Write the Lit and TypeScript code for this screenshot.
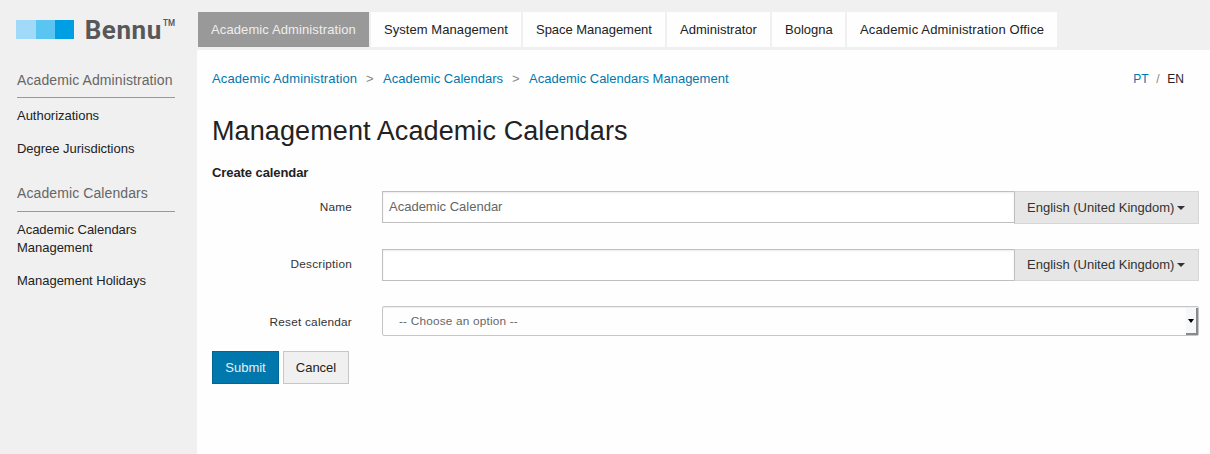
import { LitElement, html, css } from "lit";
import { customElement } from "lit/decorators.js";
import { classMap } from "lit/directives/class-map.js";
import { styleMap } from "lit/directives/style-map.js";

const base = css`
  *, *::before, *::after { box-sizing: border-box; }
  a { text-decoration: none; color: inherit; }
`;

@customElement("bennu-logo")
class BennuLogo extends LitElement {
  static styles = css`
    :host { display: block; height: 30px; }
    svg { display: block; }
    .word { font: 700 26px "Roboto", sans-serif; fill: #58585a; }
    .tm { font: 600 8.5px "Roboto", sans-serif; fill: #58585a; }
  `;
  render() {
    return html`<svg width="162" height="30" viewBox="0 0 162 30">
      <rect x="0" y="4" width="20" height="19" fill="#a1daf8" />
      <rect x="20" y="4" width="19" height="19" fill="#5bc5f2" />
      <rect x="39" y="4" width="19" height="19" fill="#009fe3" />
      <text class="word" x="68.7" y="23" textLength="76.5" lengthAdjust="spacing">Bennu</text>
      <text class="tm" x="147" y="10" textLength="12" lengthAdjust="spacingAndGlyphs">TM</text>
    </svg>`;
  }
}

@customElement("side-menu")
class SideMenu extends LitElement {
  static styles = [base, css`
    :host { display: block; width: 197px; padding: 16px 22px 0 16px; background: #f0f0f0; color: #222; }
    .group { margin: 0 0 18px 1px; width: 158px; }
    .heading { height: 36px; padding-top: 8px; border-bottom: 1px solid #999; font-size: 14px; line-height: 18px; letter-spacing: .1px; color: #666; white-space: nowrap; }
    .first { margin-top: 17px; height: 35px; }
    .item { display: block; margin-top: 15px; line-height: 18px; letter-spacing: -.02px; }
    .heading + .item { margin-top: 9px; }
  `];
  render() {
    return html`<bennu-logo></bennu-logo>
      <div class="group">
        <div class="heading first">Academic Administration</div>
        <a class="item">Authorizations</a>
        <a class="item">Degree Jurisdictions</a>
      </div>
      <div class="group">
        <div class="heading">Academic Calendars</div>
        <a class="item">Academic Calendars Management</a>
        <a class="item">Management Holidays</a>
      </div>`;
  }
}

const tabs = [
  { title: "Academic Administration", width: 171, tracking: 0.11 },
  { title: "System Management", width: 150, tracking: 0.06 },
  { title: "Space Management", width: 142, tracking: -0.03 },
  { title: "Administrator", width: 103, tracking: 0.03 },
  { title: "Bologna", width: 73, tracking: 0 },
  { title: "Academic Administration Office", width: 210, tracking: 0.15 },
];

@customElement("top-tabs")
class TopTabs extends LitElement {
  static styles = [base, css`
    :host { display: flex; gap: 2px; height: 50px; padding: 12px 0 3px 1px; background: #f0f0f0; }
    .tab { flex: none; padding-left: 13px; line-height: 35px; background: #fefefe; color: #222; white-space: nowrap; }
    .on { background: #999; color: #eee; }
  `];
  render() {
    return tabs.map((t, i) => html`<a class=${classMap({ tab: true, on: i === 0 })}
      style=${styleMap({ width: `${t.width}px`, letterSpacing: `${t.tracking}px` })}>${t.title}</a>`);
  }
}

@customElement("calendar-form")
class CalendarForm extends LitElement {
  static styles = [base, css`
    :host { display: block; }
    .row { display: grid; grid-template-columns: 140px 817px; column-gap: 30px; }
    .name { height: 58px; }
    .description { height: 57px; }
    .reset { height: 45px; }
    .label { font-size: 11.8px; line-height: 32px; letter-spacing: .22px; text-align: right; color: #333; }
    .description .label { line-height: 31px; }
    .group { display: flex; align-items: flex-start; }
    .input { width: 632px; height: 32px; padding: 0 6px; border: 1px solid #bfbfbf; border-right: 0; box-shadow: inset 0 1px 2px rgba(0,0,0,.08); background: #fff; color: #666; line-height: 30px; }
    .lang { display: flex; align-items: center; gap: 3px; width: 185px; height: 33px; padding-left: 12px; border: 1px solid #d6d6d6; border-left-color: #bfbfbf; background: #e6e6e6; color: #333; white-space: nowrap; }
    .description .lang { height: 32px; }
    .description .lang span { margin-top: -1px; }
    .caret { border: 4px solid transparent; border-top-color: #333; border-bottom: 0; }
    .select { display: flex; justify-content: space-between; height: 30px; padding: 1px 0 0 16px; border: 1px solid #c6c6c6; border-radius: 2px; box-shadow: inset 0 1px 1px rgba(0,0,0,.07); background: #fefefe; font-size: 11.8px; line-height: 27px; letter-spacing: .19px; color: #666; }
    .arrow { display: flex; align-items: center; justify-content: center; width: 12px; background: #f5f7f8; border-right: 2px solid #8a8a8a; border-bottom: 2px solid #8a8a8a; }
    .arrow::before { content: ""; border: 3.5px solid transparent; border-top: 4px solid #000; border-bottom: 0; }
    .actions { display: flex; gap: 4px; }
    .btn { width: 66px; height: 33px; padding: 0; border: 1px solid #c6c6c6; background: #f0f0f0; color: #222; font: inherit; line-height: 31px; }
    .primary { width: 67px; background: #0078ad; border-color: #006692; color: #eee; }
  `];
  lang() {
    return html`<div class="lang"><span>English (United Kingdom)</span><i class="caret"></i></div>`;
  }
  render() {
    return html`
      <div class="row name"><div class="label">Name</div><div class="group"><div class="input">Academic Calendar</div>${this.lang()}</div></div>
      <div class="row description"><div class="label">Description</div><div class="group"><div class="input"></div>${this.lang()}</div></div>
      <div class="row reset"><div class="label">Reset calendar</div><div><div class="select"><span>-- Choose an option --</span><span class="arrow"></span></div></div></div>
      <div class="actions"><button class="btn primary">Submit</button><button class="btn">Cancel</button></div>`;
  }
}

@customElement("app-root")
class AppRoot extends LitElement {
  static styles = [base, css`
    :host { display: flex; width: 1210px; height: 454px; overflow: hidden; background: #fefefe; font: 13px "Liberation Sans", Arial, sans-serif; color: #222; }
    side-menu { flex: none; }
    .main { flex: 1; }
    .content { padding: 19px 0 0 15px; }
    .bar { display: flex; justify-content: space-between; width: 972px; line-height: 19px; }
    .crumbs { display: flex; color: #0078ad; }
    .root { letter-spacing: .12px; }
    .sep { width: 26px; padding-left: 9px; color: #888; }
    .langs { display: flex; gap: 7px; font-size: 12px; line-height: 20px; }
    .pt { width: 16px; color: #0078ad; }
    .slash { width: 4px; color: #888; }
    h1 { margin: 24px 0 0; font-size: 27px; line-height: 36px; font-weight: 400; letter-spacing: .1px; }
    h2 { margin: 15px 0 9px; font-size: 13px; line-height: 18px; font-weight: 700; letter-spacing: -.08px; }
  `];
  render() {
    return html`<side-menu></side-menu>
      <div class="main">
        <top-tabs></top-tabs>
        <div class="content">
          <div class="bar">
            <div class="crumbs"><a class="root">Academic Administration</a><span class="sep">&gt;</span><a>Academic Calendars</a><span class="sep">&gt;</span><a>Academic Calendars Management</a></div>
            <div class="langs"><a class="pt">PT</a><span class="slash">/</span><a>EN</a></div>
          </div>
          <h1>Management Academic Calendars</h1>
          <h2>Create calendar</h2>
          <calendar-form></calendar-form>
        </div>
      </div>`;
  }
}
